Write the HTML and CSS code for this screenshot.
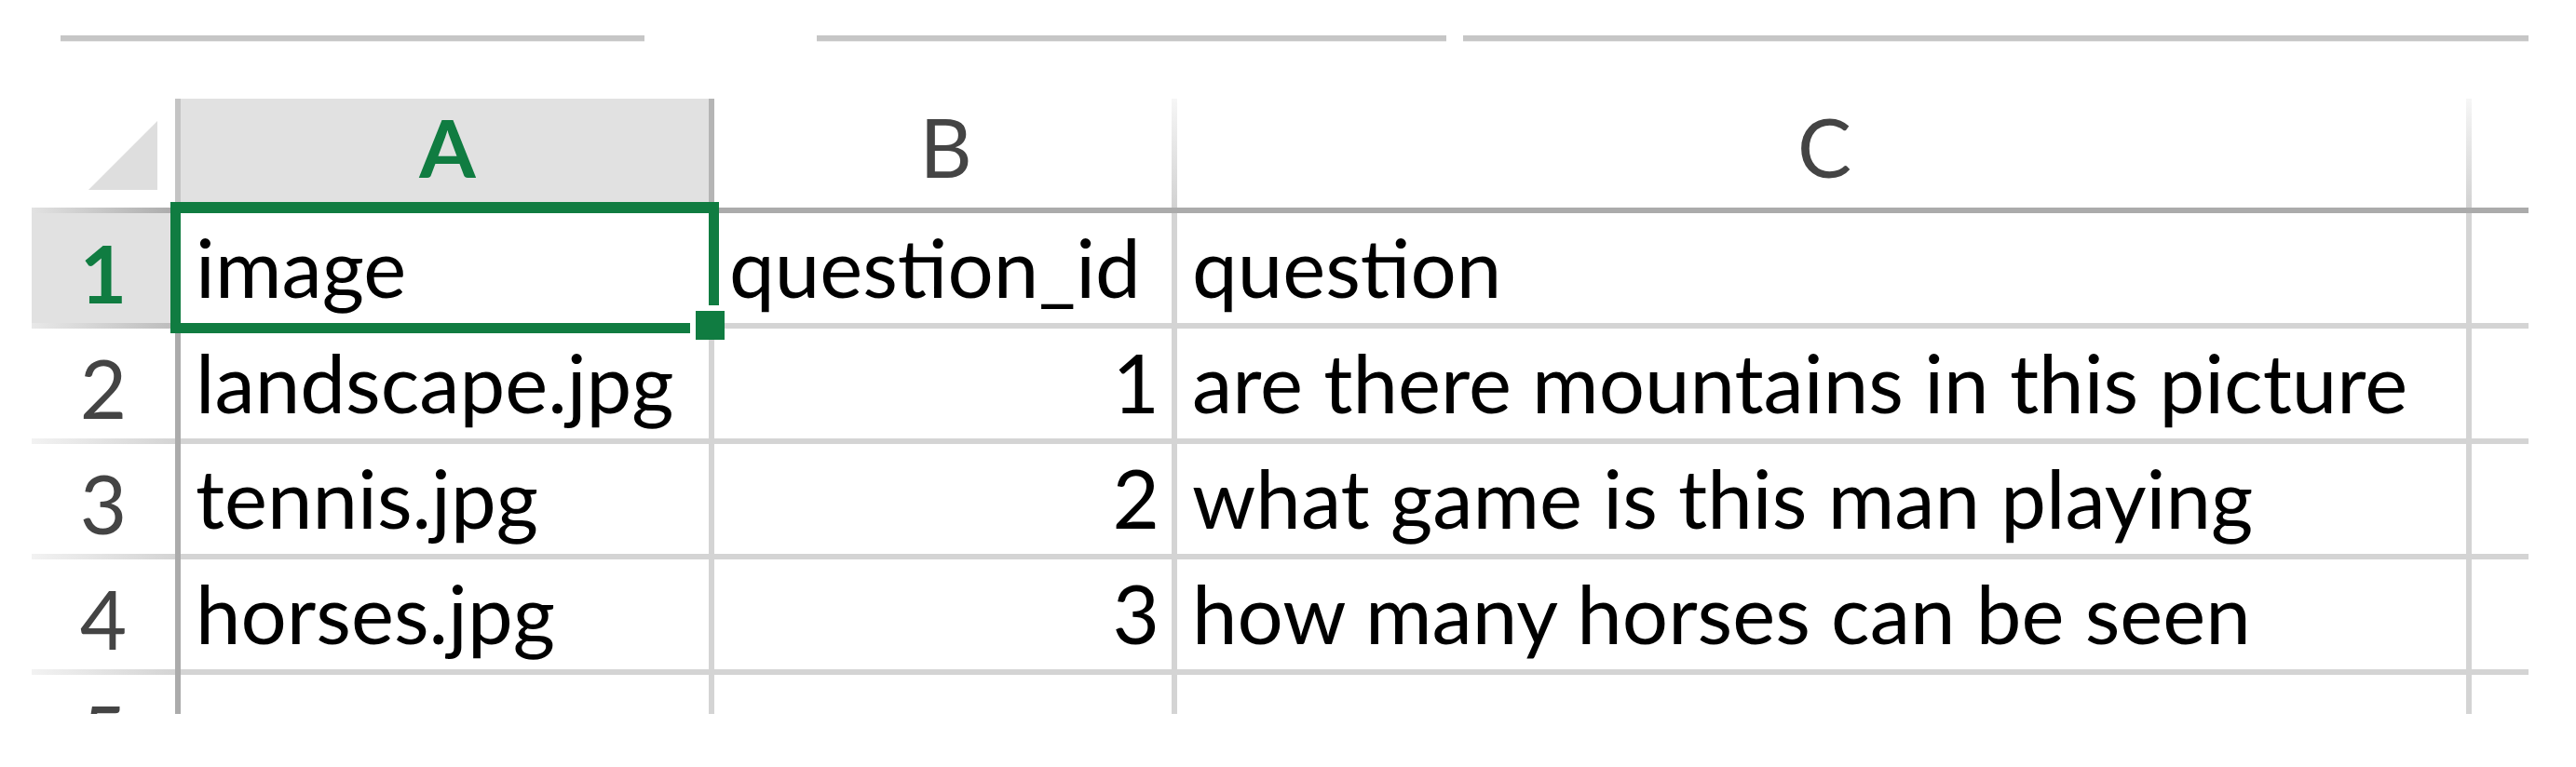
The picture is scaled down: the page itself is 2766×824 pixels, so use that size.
FILE: index.html
```html
<!DOCTYPE html>
<html lang="en">
<head>
    <meta charset="UTF-8">
    <title>Questions</title>
    <link rel="stylesheet" href="styles.css">
</head>
<body>
    <!-- bits of the formula bar left above the grid -->
    <div class="ribbon">
        <span class="ribbon-line seg1"></span>
        <span class="ribbon-line seg2"></span>
        <span class="ribbon-line seg3"></span>
    </div>

    <div class="sheet">
        <!-- header row -->
        <div class="corner">
            <svg width="74" height="74" viewBox="0 0 74 74"><polygon points="74,0 74,74 0,74" fill="#dedede"/></svg>
        </div>
        <div class="col-head active">A</div>
        <div class="col-head">B</div>
        <div class="col-head">C</div>
        <div class="col-head last"></div>

        <!-- row 1 -->
        <div class="row-head active">1</div>
        <div class="cell selected">image
            <div class="selection"></div>
            <div class="fill-handle"></div>
        </div>
        <div class="cell">question_id</div>
        <div class="cell">question</div>
        <div class="cell last"></div>

        <!-- row 2 -->
        <div class="row-head">2</div>
        <div class="cell">landscape.jpg</div>
        <div class="cell num">1</div>
        <div class="cell">are there mountains in this picture</div>
        <div class="cell last"></div>

        <!-- row 3 -->
        <div class="row-head">3</div>
        <div class="cell">tennis.jpg</div>
        <div class="cell num">2</div>
        <div class="cell">what game is this man playing</div>
        <div class="cell last"></div>

        <!-- row 4 -->
        <div class="row-head">4</div>
        <div class="cell">horses.jpg</div>
        <div class="cell num">3</div>
        <div class="cell">how many horses can be seen</div>
        <div class="cell last"></div>

        <!-- row 5, cut off -->
        <div class="row-head">5</div>
        <div class="cell"></div>
        <div class="cell"></div>
        <div class="cell"></div>
        <div class="cell last"></div>
    </div>
</body>
</html>
```

FILE: styles.css
```css
body {
    margin: 0;
    background-color: #fff;
    font-family: Lato, "Liberation Sans", sans-serif;
    color: #000;
}

.ribbon {
    display: flex;
    padding-top: 38px;
}

.ribbon-line {
    height: 6px;
    background-color: #c6c6c6;
    box-shadow: 0 1px 0 #ececec;
}

.seg1 {
    margin-left: 65px;
    width: 627px;
}

.seg2 {
    margin-left: 185px;
    width: 676px;
}

.seg3 {
    margin-left: 18px;
    width: 1144px;
}

.sheet {
    display: grid;
    grid-template-columns: 160px 573px 497px 1390px 61px;
    grid-template-rows: 123px repeat(5, 124px);
    margin: 62px 0 0 34px;
    width: 2681px;
    height: 661px;
    overflow: hidden;
    font-size: 87px;
    line-height: 1;
}

.sheet > div {
    box-sizing: border-box;
    display: flex;
    align-items: flex-end;
    white-space: nowrap;
}

/* headers */
.corner {
    padding: 24px 0 0 61px;
    align-items: flex-start !important;
    border-right: 6px solid #c4c4c4;
    background: linear-gradient(to right, #e2e2e2, #ababab) left bottom / 100% 6px no-repeat;
}

.col-head {
    justify-content: center;
    padding-bottom: 22px;
    color: #444;
    border-bottom: 6px solid #ababab;
    background: linear-gradient(to bottom, #f6f6f6, #d2d2d2) right top / 6px 100% no-repeat;
}

.col-head.active {
    color: #107c41;
    font-weight: bold;
    background: linear-gradient(#b5b5b5, #b5b5b5) right top / 6px 100% no-repeat, #e1e1e1;
}

.col-head.last {
    background: none;
}

.row-head {
    justify-content: center;
    padding-bottom: 17px;
    color: #444;
    border-right: 6px solid #ababab;
    background: linear-gradient(to right, #f2f2f2, #d4d4d4) left bottom / 100% 6px no-repeat;
}

.row-head.active {
    color: #107c41;
    font-weight: bold;
    background: linear-gradient(to right, #e8e8e8, #bcbcbc) left bottom / 100% 6px no-repeat, #e1e1e1;
}

/* cells */
.cell {
    padding: 0 13px 17px 16px;
    border-right: 6px solid #d4d4d4;
    border-bottom: 6px solid #d4d4d4;
}

.cell.num {
    justify-content: flex-end;
}

.cell.last {
    border-right: none;
}

.cell.selected {
    position: relative;
}

.selection {
    position: absolute;
    left: -11px;
    top: -12px;
    right: -11px;
    bottom: -11px;
    border: 11px solid #107c41;
    border-top-width: 12px;
}

.fill-handle {
    position: absolute;
    left: 547px;
    top: 99px;
    width: 31px;
    height: 31px;
    background-color: #107c41;
    border-top: 6px solid #fff;
    border-left: 6px solid #fff;
}
```
